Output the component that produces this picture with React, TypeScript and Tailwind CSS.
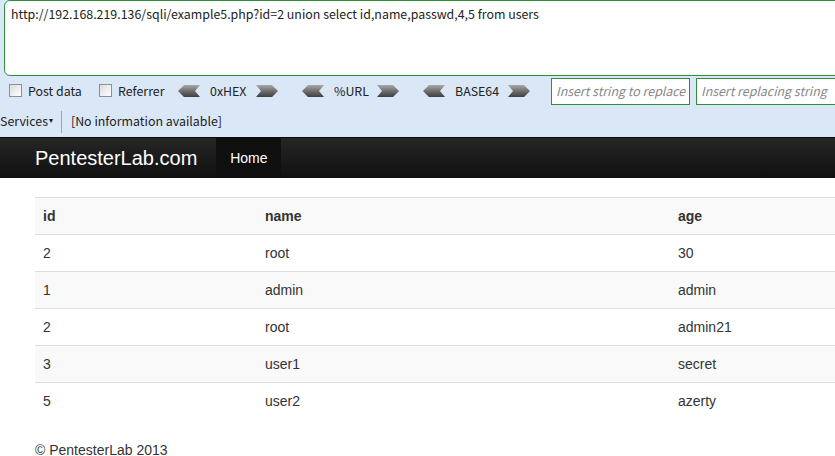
import React from "react";

const rows = [
  ["2", "root", "30"],
  ["1", "admin", "admin"],
  ["2", "root", "admin21"],
  ["3", "user1", "secret"],
  ["5", "user2", "azerty"],
];

function Chevron({ dir }: { dir: "left" | "right" }) {
  const pts =
    dir === "left"
      ? "0,6 6,0 22,0 17,6 22,12 6,12"
      : "0,0 16,0 22,6 16,12 0,12 5,6";
  const id = `g-${dir}`;
  return (
    <svg width="22" height="12" viewBox="0 0 22 12" className="shrink-0">
      <defs>
        <linearGradient id={id} x1="0" y1="0" x2="0" y2="1">
          <stop offset="0" stopColor="#a9a9a9" />
          <stop offset="0.5" stopColor="#6f6f6f" />
          <stop offset="1" stopColor="#3f3f3f" />
        </linearGradient>
      </defs>
      <polygon points={pts} fill={`url(#${id})`} />
    </svg>
  );
}

function Encoder({ label, width }: { label: string; width: string }) {
  return (
    <div className="flex items-center shrink-0">
      <Chevron dir="left" />
      <span className={`pl-[10px] whitespace-nowrap ${width}`}>{label}</span>
      <Chevron dir="right" />
    </div>
  );
}

function Check({ label, width }: { label: string; width: string }) {
  return (
    <label className={`flex items-center gap-[6px] shrink-0 whitespace-nowrap ${width}`}>
      <span className="w-[13px] h-[13px] border border-[#8f8f8f] bg-gradient-to-br from-[#dcdcdc] to-[#ffffff]" />
      <span>{label}</span>
    </label>
  );
}

export default function App() {
  return (
    <div className="w-[835px] h-[456px] overflow-hidden bg-white">
      <div
        className="bg-[#dae7f6] text-[12.4px] text-[#222]"
        style={{ fontFamily: '"Noto Sans CJK SC", "Open Sans", sans-serif' }}
      >
        <div className="pl-[4px]">
          <div className="h-[76px] -mr-[10px] bg-white border border-[#2f8f3a] rounded-[6px] px-[6px] pt-[4px] leading-[18px]">
            http://192.168.219.136/sqli/example5.php?id=2 union select id,name,passwd,4,5 from users
          </div>
        </div>
        <div className="h-[30px] flex items-center pl-[9px] overflow-hidden">
          <Check label="Post data" width="w-[90px]" />
          <Check label="Referrer" width="w-[79px]" />
          <Encoder label="0xHEX" width="w-[56px]" />
          <div className="w-[24px] shrink-0" />
          <Encoder label="%URL" width="w-[53px]" />
          <div className="w-[24px] shrink-0" />
          <Encoder label="BASE64" width="w-[63px]" />
          <div className="w-[21px] shrink-0" />
          <div className="w-[139px] h-[27px] shrink-0 bg-white border border-[#2f8f3a] flex items-center pl-[4px] italic text-[#888] whitespace-nowrap overflow-hidden">
            Insert string to replace
          </div>
          <div className="w-[6px] shrink-0" />
          <div className="w-[140px] h-[27px] shrink-0 bg-white border border-[#2f8f3a] flex items-center pl-[4px] italic text-[#888] whitespace-nowrap overflow-hidden">
            Insert replacing string
          </div>
        </div>
        <div className="h-[31px] flex items-center">
          <span>Services</span>
          <span className="text-[8px] ml-[1px] -mt-[4px]">▾</span>
          <span className="w-px h-[22px] bg-[#9aa6b4] ml-[8px] mr-[9px]" />
          <span>[No information available]</span>
        </div>
      </div>

      <div
        className="h-[41px] bg-gradient-to-b from-[#262626] to-[#101010] border-t border-[#0a0a0a] flex items-stretch pl-[35px]"
        style={{ fontFamily: '"Liberation Sans", Arial, sans-serif' }}
      >
        <div className="text-white text-[20px] flex items-center pr-[19px]">PentesterLab.com</div>
        <div className="w-[65px] bg-[#0f0f0f] flex items-center justify-center text-[14px] text-white">
          Home
        </div>
      </div>

      <div
        className="pl-[35px] pt-[19px] text-[14px] leading-[20px] text-[#333]"
        style={{ fontFamily: '"Liberation Sans", Arial, sans-serif' }}
      >
        <table className="w-[940px] border-collapse table-fixed">
          <colgroup>
            <col className="w-[222px]" />
            <col className="w-[413px]" />
            <col />
          </colgroup>
          <thead>
            <tr className="bg-[#f9f9f9] border-t border-[#dddddd]">
              <th className="text-left font-bold h-[37px] px-[8px]">id</th>
              <th className="text-left font-bold px-[8px]">name</th>
              <th className="text-left font-bold px-[8px]">age</th>
            </tr>
          </thead>
          <tbody>
            {rows.map((r, i) => (
              <tr key={i} className={`border-t border-[#dddddd] ${i % 2 === 1 ? "bg-[#f9f9f9]" : ""}`}>
                <td className="h-[37px] px-[8px]">{r[0]}</td>
                <td className="px-[8px]">{r[1]}</td>
                <td className="px-[8px]">{r[2]}</td>
              </tr>
            ))}
          </tbody>
        </table>
        <div className="pt-[20px]">© PentesterLab 2013</div>
      </div>
    </div>
  );
}
